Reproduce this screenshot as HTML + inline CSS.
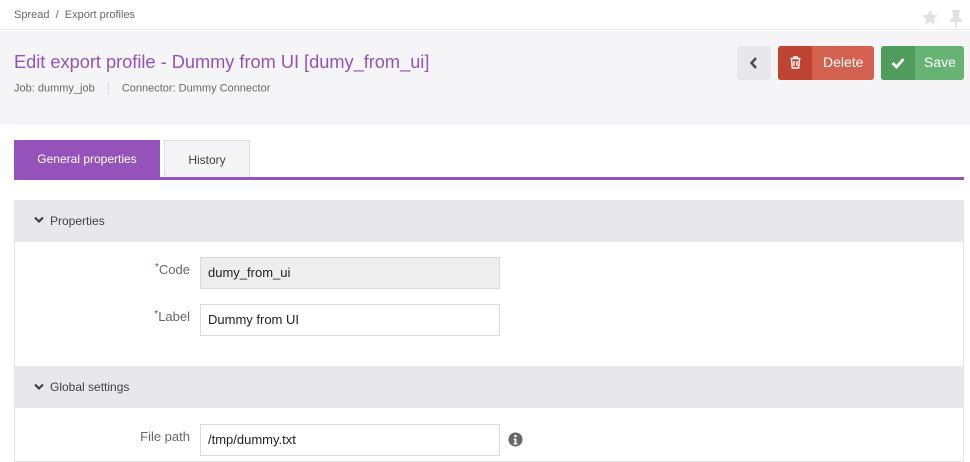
<!DOCTYPE html>
<html><head><style>
*{box-sizing:border-box;margin:0;padding:0}
body{width:970px;height:462px;overflow:hidden;background:#fff;font-family:"Liberation Sans",sans-serif;color:#67686d;position:relative}
.abs{position:absolute}
.top{left:0;top:0;width:970px;height:30px;background:#fff;border-bottom:1px solid #eaeaee}
.crumb{left:14px;top:9px;font-size:11px;color:#67686d}
.head{left:0;top:31px;width:970px;height:94px;background:#f5f5f7}
h1{position:absolute;left:14px;top:52px;font-size:18.2px;font-weight:normal;color:#9452ba;white-space:nowrap}
.meta{left:14px;top:82px;font-size:11px;color:#67686d}
.btn{height:34px;top:46px;border-radius:3px;color:#fff;font-size:14px}
.tab{top:140px;height:38px;font-size:12px;text-align:center;line-height:38px}
.sec{left:14px;width:950px;height:42px;background:#e8e8ec;font-size:12px;color:#3f3f44;line-height:42px;padding-left:36px}
.lbl{font-size:13px;text-align:right;width:100px;left:90px}
.inp{left:200px;width:300px;height:32px;border:1px solid #d9d9e3;font-size:13px;line-height:30px;padding-left:7px;color:#222}
.star{color:#c2262e;font-size:10px;vertical-align:top}
</style></head><body>
<div class="abs top"></div>
<div class="abs crumb">Spread &nbsp;/&nbsp; Export profiles</div>
<svg class="abs" style="left:921px;top:9px" width="18" height="17" viewBox="0 0 24 24"><path d="M12 1l3.4 7 7.6 1-5.5 5.3 1.3 7.7L12 18.3 5.2 22l1.3-7.7L1 9l7.6-1z" fill="#e2e2e6"/></svg>
<svg class="abs" style="left:948px;top:9px" width="16" height="18" viewBox="0 0 16 18"><path d="M4 1h8v2h-1v5l3 3v2H9v5H7v-5H2v-2l3-3V3H4z" fill="#e2e2e6"/></svg>
<div class="abs head"></div>
<h1>Edit export profile - Dummy from UI [dumy_from_ui]</h1>
<div class="abs meta">Job: dummy_job <span style="display:inline-block;width:1px;height:13px;background:#ddd;margin:0 10px;vertical-align:middle"></span> Connector: Dummy Connector</div>
<div class="abs btn" style="left:737px;width:34px;background:#e8e8ec"><svg style="position:absolute;left:12px;top:11px" width="10" height="12" viewBox="0 0 10 12"><path d="M7 1L2.5 6 7 11" stroke="#4a4a55" stroke-width="2.5" fill="none"/></svg></div>
<div class="abs btn" style="left:778px;width:96px;background:#d4604f;overflow:hidden"><div class="abs" style="left:0;top:0;width:34px;height:34px;background:#bd4333"></div>
<svg class="abs" style="left:12px;top:10px" width="11" height="13" viewBox="0 0 11 13"><path d="M0.5 2.5h10M4 2.5V1h3v1.5M1.5 3.5l.8 8.5h6.4l.8-8.5M4 5v5M7 5v5" stroke="#fff" stroke-width="1.4" fill="none"/></svg>
<span class="abs" style="left:45px;top:8px">Delete</span></div>
<div class="abs btn" style="left:881px;width:83px;background:#67b373;overflow:hidden"><div class="abs" style="left:0;top:0;width:34px;height:34px;background:#4f9c5d"></div>
<svg class="abs" style="left:10px;top:11px" width="14" height="12" viewBox="0 0 14 12"><path d="M1.5 6l4 4 7-8" stroke="#fff" stroke-width="2.8" fill="none"/></svg>
<span class="abs" style="left:43px;top:8px">Save</span></div>
<div class="abs tab" style="left:14px;width:146px;background:#9452ba;color:#fff">General properties</div>
<div class="abs tab" style="left:164px;width:86px;background:#f5f5f7;border:1px solid #dcdce0;border-bottom:none;color:#3f3f44">History</div>
<div class="abs" style="left:14px;top:177px;width:950px;height:3px;background:#9452ba"></div>
<div class="abs" style="left:14px;top:200px;width:950px;height:262px;border:1px solid #e4e4e8"></div>
<div class="abs sec" style="top:200px">Properties</div>
<svg class="abs" style="left:34px;top:216px" width="10" height="8" viewBox="0 0 10 8"><path d="M1 1.5l4 4 4-4" stroke="#3f3f44" stroke-width="2.2" fill="none"/></svg>
<div class="abs lbl" style="top:262px"><span class="star">*</span>Code</div>
<div class="abs inp" style="top:257px;background:#eeeeee">dumy_from_ui</div>
<div class="abs lbl" style="top:309px"><span class="star">*</span>Label</div>
<div class="abs inp" style="top:304px;background:#fff">Dummy from UI</div>
<div class="abs sec" style="top:366px">Global settings</div>
<svg class="abs" style="left:34px;top:383px" width="10" height="8" viewBox="0 0 10 8"><path d="M1 1.5l4 4 4-4" stroke="#3f3f44" stroke-width="2.2" fill="none"/></svg>
<div class="abs lbl" style="top:429px">File path</div>
<div class="abs inp" style="top:424px;background:#fff">/tmp/dummy.txt</div>
<svg class="abs" style="left:508px;top:432px" width="15" height="15" viewBox="0 0 16 16"><circle cx="8" cy="8" r="7.5" fill="#67686d"/><circle cx="8" cy="4.3" r="1.4" fill="#fff"/><path d="M6 7h3v5h1.2v1.3H5.8V12H7V8.3H6z" fill="#fff"/></svg>
</body></html>
